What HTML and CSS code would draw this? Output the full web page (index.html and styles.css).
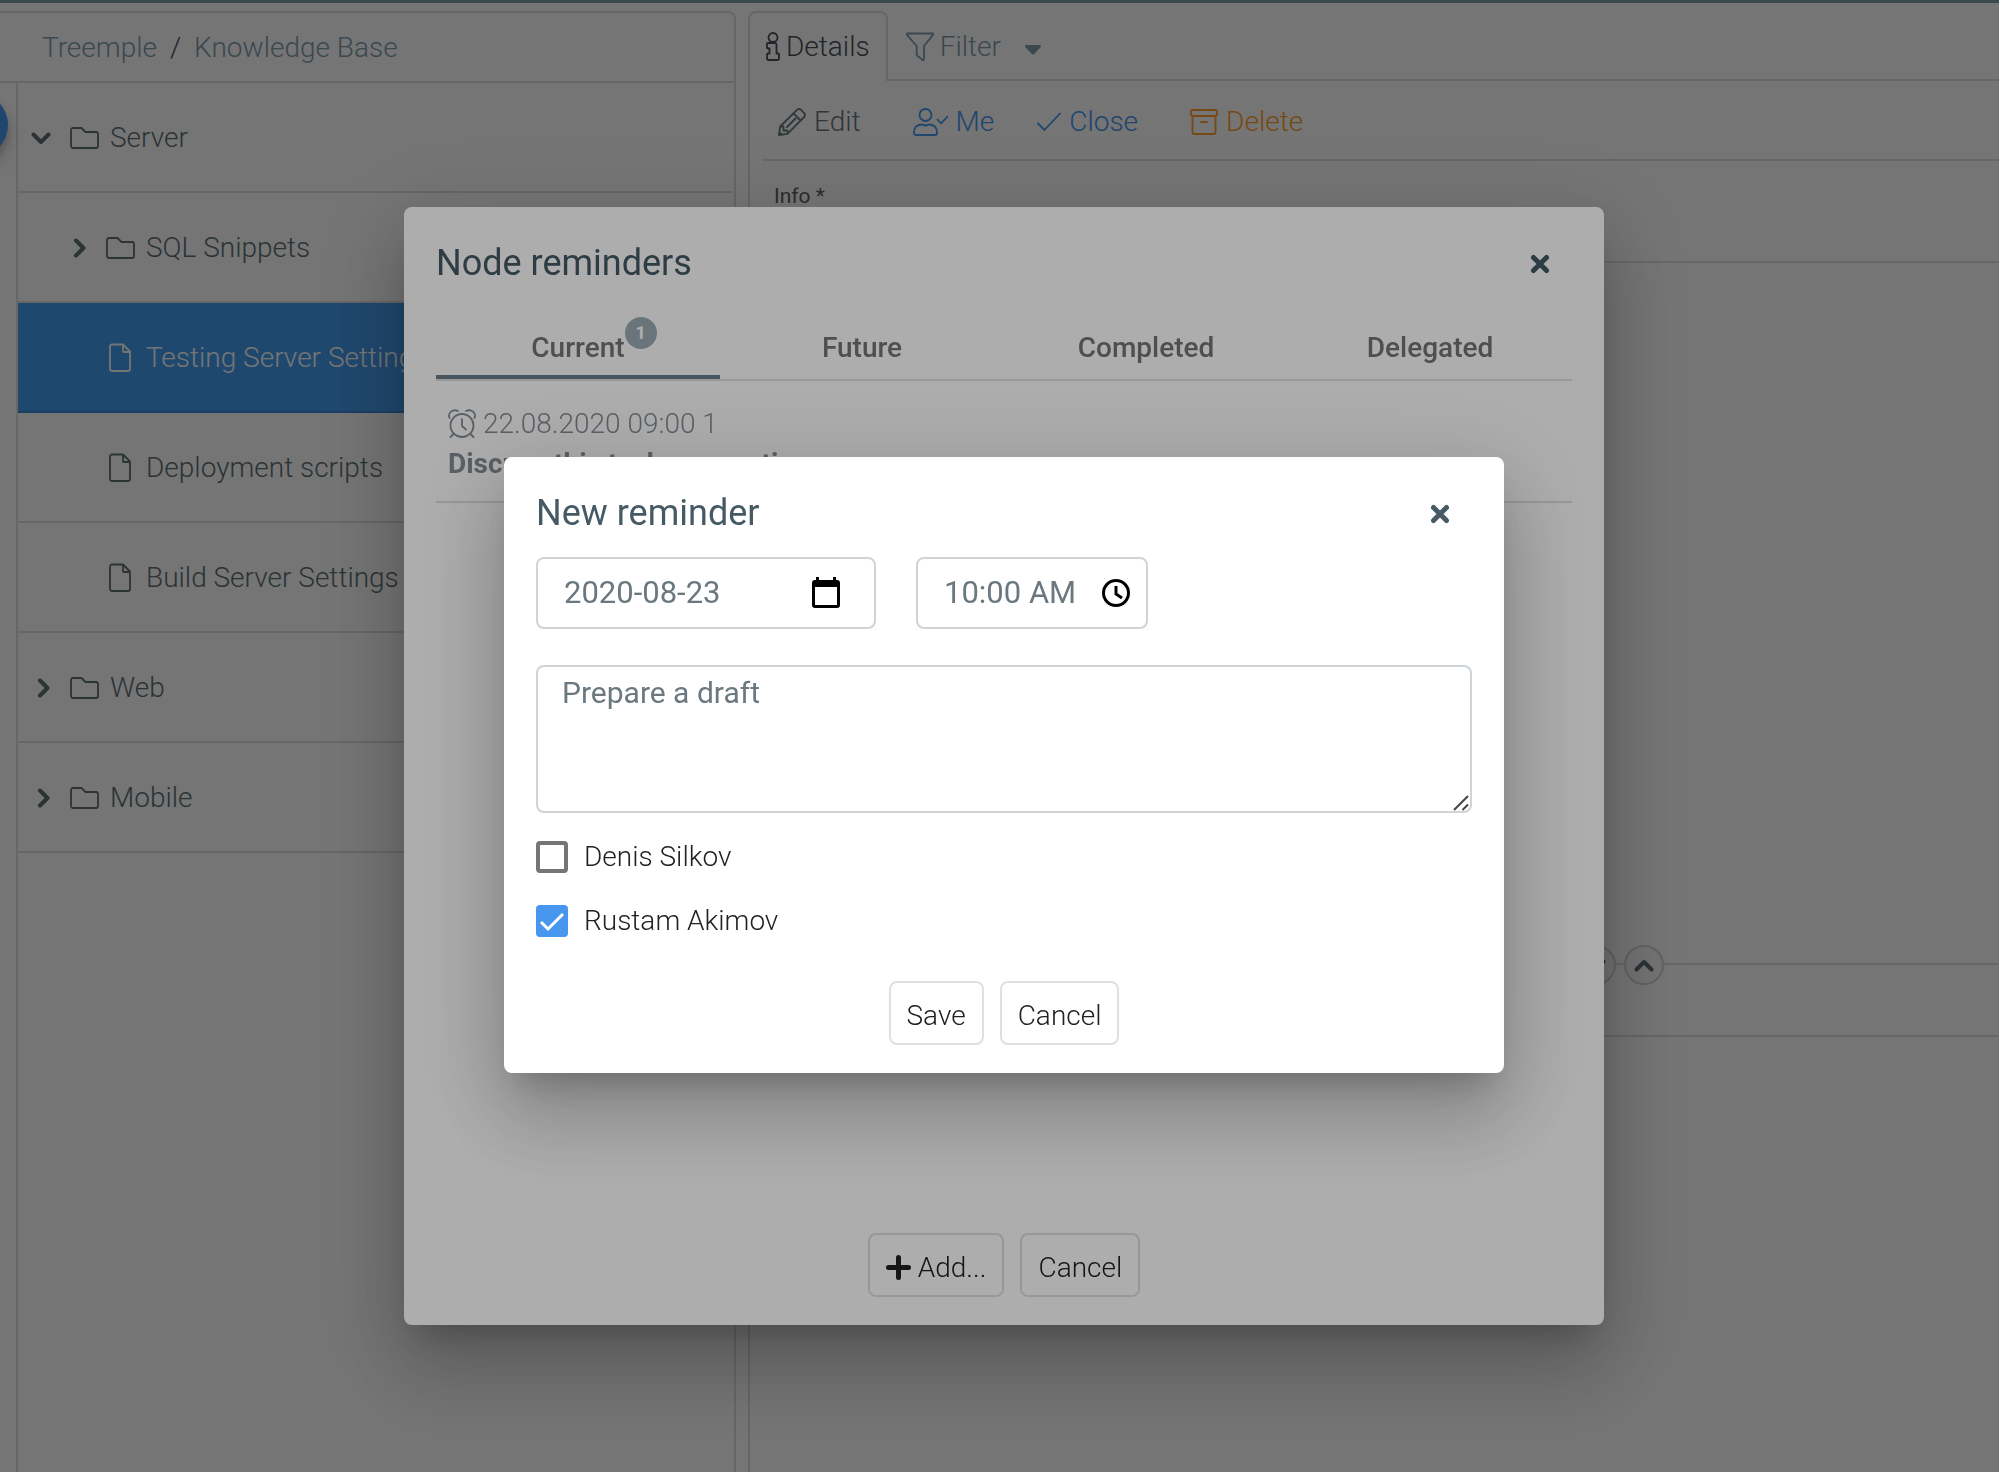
FILE: index.html
```html
<!DOCTYPE html>
<html lang="en">
<head>
<meta charset="utf-8">
<title>Treemple</title>
<link rel="stylesheet" href="styles.css">
</head>
<body>
<svg class="sprite" aria-hidden="true">
  <symbol id="folder" viewBox="0 0 30 24"><path d="M1 4a2 2 0 0 1 2-2h8.500l4 4H26a2 2 0 0 1 2 2v12a2 2 0 0 1-2 2H3a2 2 0 0 1-2-2z"/></symbol>
  <symbol id="file" viewBox="0 0 22 30"><path d="M1 3.500A2 2 0 0 1 3 1.500h11l7 7V26a2 2 0 0 1-2 2H3a2 2 0 0 1-2-2zM14 1.500V8a1 1 0 0 0 1 1h6"/></symbol>
  <symbol id="chev-right" viewBox="0 0 20 20"><path d="M6 2.500 13.500 10 6 17.500"/></symbol>
  <symbol id="chev-down" viewBox="0 0 20 20"><path d="M2.500 6.500 10 14l7.500-7.500"/></symbol>
  <symbol id="chev-up" viewBox="0 0 20 20"><path d="M2.500 14.500 10 7l7.500 7.500"/></symbol>
  <symbol id="times" viewBox="0 0 20 20"><path d="M3.500 3.500l13 13M16.500 3.500l-13 13"/></symbol>
</svg>

<div class="app">
  <section class="panel tree-panel">
    <nav class="breadcrumb" aria-label="Breadcrumb">
      <a href="#">Treemple</a><span>/</span><a href="#">Knowledge Base</a>
    </nav>
    <ul class="tree">
      <li class="row open"><svg class="ico chev"><use href="#chev-down"/></svg><svg class="ico folder"><use href="#folder"/></svg>Server</li>
      <li class="row child"><svg class="ico chev"><use href="#chev-right"/></svg><svg class="ico folder"><use href="#folder"/></svg>SQL Snippets</li>
      <li class="row child leaf selected"><svg class="ico file"><use href="#file"/></svg>Testing Server Settings</li>
      <li class="row child leaf"><svg class="ico file"><use href="#file"/></svg>Deployment scripts</li>
      <li class="row child leaf"><svg class="ico file"><use href="#file"/></svg>Build Server Settings</li>
      <li class="row"><svg class="ico chev"><use href="#chev-right"/></svg><svg class="ico folder"><use href="#folder"/></svg>Web</li>
      <li class="row"><svg class="ico chev"><use href="#chev-right"/></svg><svg class="ico folder"><use href="#folder"/></svg>Mobile</li>
    </ul>
    <button class="fab" aria-label="Open menu"></button>
  </section>

  <section class="details">
    <div class="detail-tabs">
      <button class="detail-tab active">
        <svg class="ico thin" width="14" height="30" viewBox="0 0 14 30"><circle cx="7" cy="5.500" r="4.500"/><path d="M2 11h7a1.500 1.500 0 0 1 1.500 1.500V21.500H12a1 1 0 0 1 1 1v4a1.500 1.500 0 0 1-1.500 1.500h-9A1.500 1.500 0 0 1 1 26.500v-4a1 1 0 0 1 1-1h1.500v-5H2a1 1 0 0 1-1-1V12a1 1 0 0 1 1-1z"/></svg>
        Details
      </button>
      <button class="detail-tab">
        <svg class="ico thin" width="28" height="30" viewBox="0 0 28 30"><path d="M1.500 1.500h25c.8 0 1 .8.500 1.400L18 14v13c0 1-1 1.400-1.700.8l-5-4c-.4-.4-.6-.8-.6-1.300V14L1 2.900c-.5-.6-.3-1.400.5-1.400z"/></svg>
        Filter
        <svg class="caret" width="16" height="10" viewBox="0 0 16 10"><path d="M1.500 0h13c1.300 0 1.800 1.300 1 2.200L9.200 9c-.7.800-1.700.8-2.400 0L.5 2.200C-.3 1.300.2 0 1.500 0z"/></svg>
      </button>
    </div>
    <div class="detail-body">
      <div class="toolbar">
        <button class="tool">
          <svg class="ico thin" width="28" height="28" viewBox="0 0 28 28"><path d="M1 27l1.200-8.500L19 1.900c1.200-1.200 2.800-1.200 4 0L26.100 5c1.200 1.200 1.200 2.800 0 4L9.500 25.800zM15.500 5.400l7.100 7.100M2.200 18.500h3.300v4h4v3.300M9 19 17.500 10.500M1.500 24.500l2 2"/></svg>
          Edit
        </button>
        <button class="tool me">
          <svg class="ico thin" width="35" height="28" viewBox="0 0 35 28"><circle cx="12.500" cy="7" r="6"/><path d="M8.500 16.500c1.500 0 2 1 4 1s2.500-1 4-1c4 0 7.500 3 7.500 7V25a2 2 0 0 1-2 2H3a2 2 0 0 1-2-2v-1.500c0-4 3.500-7 7.500-7zM24.500 11.500l3.500 4 6.500-7"/></svg>
          Me
        </button>
        <button class="tool close-node">
          <svg class="ico thin" width="24" height="28" viewBox="0 0 24 28"><path d="M1 15.500l6.500 6.500L23 5.500"/></svg>
          Close
        </button>
        <button class="tool delete">
          <svg class="ico thin" width="28" height="28" viewBox="0 0 28 28"><rect x="1" y="2" width="26" height="6" rx="1.500"/><path d="M2.500 8v16a2 2 0 0 0 2 2h19a2 2 0 0 0 2-2V8M11 14h6"/></svg>
          Delete
        </button>
      </div>
      <div class="info"><span>Info *</span></div>
      <div class="splitter">
        <button class="round" aria-label="Move down"><svg class="ico"><use href="#chev-down"/></svg></button>
        <button class="round" aria-label="Move up"><svg class="ico"><use href="#chev-up"/></svg></button>
      </div>
      <div class="comments-head"></div>
    </div>
  </section>
</div>

<div class="backdrop">
  <div class="dialog reminders" role="dialog" aria-labelledby="reminders-title">
    <header><h2 id="reminders-title">Node reminders</h2><button class="dismiss" aria-label="Close"><svg class="ico"><use href="#times"/></svg></button></header>
    <div class="tabs" role="tablist">
      <button class="tab active" role="tab"><span class="tab-label">Current<span class="badge">1</span></span></button>
      <button class="tab" role="tab">Future</button>
      <button class="tab" role="tab">Completed</button>
      <button class="tab" role="tab">Delegated</button>
    </div>
    <div class="list">
      <article class="item">
        <div class="when">
          <svg class="ico thin" width="28" height="30" viewBox="0 0 28 30"><circle cx="14" cy="16.500" r="11.500"/><path d="M14 10v7l4 3.500M5.500 25 2.500 28M22.500 25l3 3M1.500 9C-.5 4 4.500-.5 10 2M26.500 9c2-5-3-9.500-8.500-7"/></svg>
          22.08.2020 09:00 1
        </div>
        <div class="what">Discuss this task on meeting</div>
      </article>
    </div>
    <footer>
      <button class="btn"><svg class="plus" width="25" height="25" viewBox="0 0 25 25"><path d="M12.500 2.500v20M2.500 12.500h20"/></svg>Add...</button>
      <button class="btn">Cancel</button>
    </footer>
  </div>
</div>

<div class="backdrop top">
  <form class="dialog new-reminder" role="dialog" aria-labelledby="new-title">
    <header><h2 id="new-title">New reminder</h2><button type="button" class="dismiss" aria-label="Close"><svg class="ico"><use href="#times"/></svg></button></header>
    <div class="fields">
      <div class="field date">
        <input type="text" value="2020-08-23" aria-label="Date">
        <svg width="30" height="32" viewBox="0 0 30 32"><path fill-rule="evenodd" d="M5 0h3v3h14V0h3v3h1a3 3 0 0 1 3 3v22a3 3 0 0 1-3 3H4a3 3 0 0 1-3-3V6a3 3 0 0 1 3-3h1zM4 10v18h22V10z"/></svg>
      </div>
      <div class="field time">
        <input type="text" value="10:00 AM" aria-label="Time">
        <svg width="28" height="28" viewBox="0 0 28 28"><circle cx="14" cy="14" r="12.500"/><path d="M14 7v8l6 4"/></svg>
      </div>
    </div>
    <div class="note">
      <textarea aria-label="Reminder text">Prepare a draft</textarea>
      <svg class="grip" width="16" height="16" viewBox="0 0 16 16"><path d="M1 15 15 1M9.500 15 15 9.500"/></svg>
    </div>
    <label class="check"><input type="checkbox"><span>Denis Silkov</span></label>
    <label class="check"><input type="checkbox" checked><span>Rustam Akimov</span></label>
    <footer>
      <button type="button" class="btn">Save</button>
      <button type="button" class="btn">Cancel</button>
    </footer>
  </form>
</div>
</body>
</html>
```
FILE: styles.css
```css
* { box-sizing: border-box; }

body {
  margin: 0;
  overflow: hidden;
  background: #fff;
  color: #212121;
  font: 300 28px/40px Roboto, "Liberation Sans", sans-serif;
}

button, input, textarea { font: inherit; color: inherit; }
button { padding: 0; border: 0; background: none; }
a { color: inherit; text-decoration: none; }
svg { flex: none; }
.sprite { position: absolute; width: 0; height: 0; }

.ico {
  fill: none;
  stroke: currentColor;
  stroke-width: 4;
  stroke-linecap: round;
  stroke-linejoin: round;
}
.ico.thin, .ico.folder, .ico.file { stroke-width: 1.8; }

/* Page behind the dialogs */
.app {
  display: grid;
  grid-template-columns: 736fr 1251fr;
  gap: 12px;
  min-height: 100vh;
  padding-top: 8px;
  border-top: 3px solid #829cab;
}

.tree-panel {
  position: relative;
  border: 2px solid #e0e0e0;
  border-width: 2px 2px 0 0;
  border-radius: 0 8px 0 0;
}
.breadcrumb {
  display: flex;
  gap: 13px;
  height: 70px;
  padding: 15px 42px 13px;
  border-bottom: 2px solid #d5e0e6;
  color: #829cab;
}
.breadcrumb span { color: #495057; }

.tree {
  height: calc(100% - 70px);
  margin: 0 2px 0 16px;
  padding: 0;
  border-left: 2px solid #e0e0e0;
  list-style: none;
}
.row {
  display: flex;
  align-items: center;
  height: 110px;
  padding: 1px 0 0 16px;
  border-bottom: 2px solid #e0e0e0;
  color: #5f7075;
}
.row.open { padding-left: 13px; }
.row.child { padding-left: 52px; }
.row.leaf { padding-left: 91px; }
.row.selected { background: #459ef2; border-color: #3c88d8; color: #fff; }
.chev { width: 20px; height: 20px; margin-right: 16px; }
.open .chev { margin-right: 19px; }
.folder { width: 30px; height: 24px; margin-right: 10px; }
.file { width: 22px; height: 30px; margin-right: 15px; }

.fab {
  position: absolute;
  top: 80px;
  left: -56px;
  width: 64px;
  height: 64px;
  border-radius: 50%;
  background: #4797ef;
  box-shadow: 0 6px 10px rgba(0, 0, 0, .2), 0 12px 20px rgba(0, 0, 0, .14);
}

.details { display: flex; flex-direction: column; }
.detail-tabs { display: flex; height: 70px; }
.detail-tabs::after { content: ""; flex: 1; border-bottom: 2px solid #e0e0e0; }
.detail-tab {
  display: flex;
  align-items: center;
  gap: 6px;
  padding: 4px 18px 0;
  border-bottom: 2px solid #e0e0e0;
  color: #829cab;
}
.detail-tab.active {
  padding: 0 16px;
  border: 2px solid #e0e0e0;
  border-bottom: 0;
  border-radius: 8px 8px 0 0;
  color: #495057;
}
.caret { margin: 6px 0 0 18px; fill: currentColor; }
.detail-body {
  flex: 1;
  padding-left: 12px;
  border-left: 2px solid #e0e0e0;
}
.toolbar {
  display: flex;
  height: 80px;
  padding: 0 16px;
  border-bottom: 2px solid #e0e0e0;
  color: #6b7a80;
}
.tool { display: flex; align-items: center; gap: 8px; height: 78px; padding-top: 3px; }
.tool.me { margin-left: 52px; color: #4797ef; }
.tool.close-node { margin-left: 43px; color: #4797ef; }
.tool.delete { margin-left: 52px; color: #ff9f2b; }
.info {
  height: 102px;
  padding: 19px 12px;
  border-bottom: 2px solid #e0e0e0;
  color: #616161;
  font-size: 21px;
  font-weight: 400;
  line-height: 32px;
}
.splitter {
  display: flex;
  align-items: center;
  gap: 8px;
  margin-top: 682px;
  height: 40px;
  background: linear-gradient(#e0e0e0, #e0e0e0) 0 18px / 100% 2px no-repeat;
}
.splitter::before { content: ""; flex: 806; }
.splitter::after { content: ""; flex: 327; }
.round {
  flex: none;
  display: grid;
  place-items: center;
  width: 40px;
  height: 40px;
  border: 2px solid #d6d6d6;
  border-radius: 50%;
  background: #fafafa;
  color: #5f7075;
}
.round svg { width: 20px; height: 20px; }
.comments-head { height: 52px; border-bottom: 2px solid #e0e0e0; }

/* Dialogs */
.backdrop {
  position: fixed;
  inset: 0;
  display: flex;
  align-items: center;
  justify-content: center;
  padding: 60px 0 0 9px;
  background: rgba(0, 0, 0, .32);
}
.backdrop.top { padding-top: 58px; }
.dialog {
  display: flex;
  flex-direction: column;
  width: 100%;
  padding: 32px 32px 28px;
  border-radius: 8px;
  background: #fff;
  box-shadow:
    0 22px 30px -14px rgba(0, 0, 0, .2),
    0 48px 76px 6px rgba(0, 0, 0, .14),
    0 18px 92px 16px rgba(0, 0, 0, .12);
}
.reminders { max-width: 1200px; }
.new-reminder { max-width: 1000px; }
.dialog header {
  display: flex;
  align-items: center;
  justify-content: space-between;
  height: 48px;
  padding-right: 20px;
  color: #455a64;
}
.dialog h2 { margin: 0; font-size: 36px; font-weight: 400; line-height: 48px; }
.dismiss { display: grid; place-items: center; width: 24px; height: 48px; padding-top: 2px; }
.dismiss svg { width: 20px; height: 20px; stroke-width: 5; }
.dialog footer { display: flex; justify-content: center; gap: 16px; }
.btn {
  display: flex;
  align-items: center;
  gap: 7px;
  height: 64px;
  padding: 5px 16px 0;
  border: 2px solid #e0e0e0;
  border-radius: 8px;
  background: #fff;
}
.plus { stroke: currentColor; stroke-width: 5; stroke-linecap: round; }

.tabs { display: flex; height: 94px; border-bottom: 2px solid #e0e0e0; }
.tab {
  flex: 1;
  height: 92px;
  padding-top: 33px;
  border-bottom: 4px solid transparent;
  color: #757575;
  font-weight: 500;
}
.tab.active { border-color: #6a7d8b; }
.tab-label { position: relative; }
.badge {
  position: absolute;
  left: 100%;
  top: -14px;
  width: 32px;
  height: 32px;
  border-radius: 50%;
  background: #9dadb6;
  color: #fff;
  font-size: 18px;
  font-weight: 700;
  line-height: 32px;
}
.list { min-height: 852px; }
.item {
  height: 122px;
  padding: 23px 12px;
  border-bottom: 2px solid #e0e0e0;
  color: #868e96;
}
.when { display: flex; align-items: center; gap: 7px; }
.what { font-weight: 700; }

.fields { display: flex; gap: 40px; margin: 20px 0 36px; }
.field {
  display: flex;
  align-items: center;
  justify-content: space-between;
  height: 72px;
  border: 2px solid #cfd4d9;
  border-radius: 8px;
}
.field.date { width: 340px; padding: 0 33px 0 26px; }
.field.time { width: 232px; padding: 0 16px 0 26px; }
.field input {
  flex: 1;
  min-width: 0;
  padding: 0;
  border: 0;
  outline: 0;
  background: none;
  color: #6b787f;
  font-size: 31px;
  font-weight: 400;
}
.time svg { fill: none; stroke: #000; stroke-width: 3; }
.note { position: relative; height: 148px; margin-bottom: 28px; }
.note textarea {
  display: block;
  width: 100%;
  height: 148px;
  padding: 6px 24px;
  border: 2px solid #cfd4d9;
  border-radius: 8px;
  resize: none;
  color: #6b787f;
  font-size: 30px;
  font-weight: 400;
}
.grip { position: absolute; right: 3px; bottom: 2px; stroke: #444; stroke-width: 2; }
.check {
  display: flex;
  align-items: center;
  gap: 16px;
  height: 32px;
  margin-bottom: 32px;
}
.check + footer { margin-top: 12px; }
.check input {
  appearance: none;
  width: 32px;
  height: 32px;
  margin: 0;
  border: 4px solid #757575;
  border-radius: 4px;
}
.check input:checked {
  border: 0;
  background: #4797ef url("data:image/svg+xml,%3Csvg xmlns='http://www.w3.org/2000/svg' viewBox='0 0 32 32'%3E%3Cpath d='M5 17l7 7L27 9' fill='none' stroke='white' stroke-width='3'/%3E%3C/svg%3E");
}
```
